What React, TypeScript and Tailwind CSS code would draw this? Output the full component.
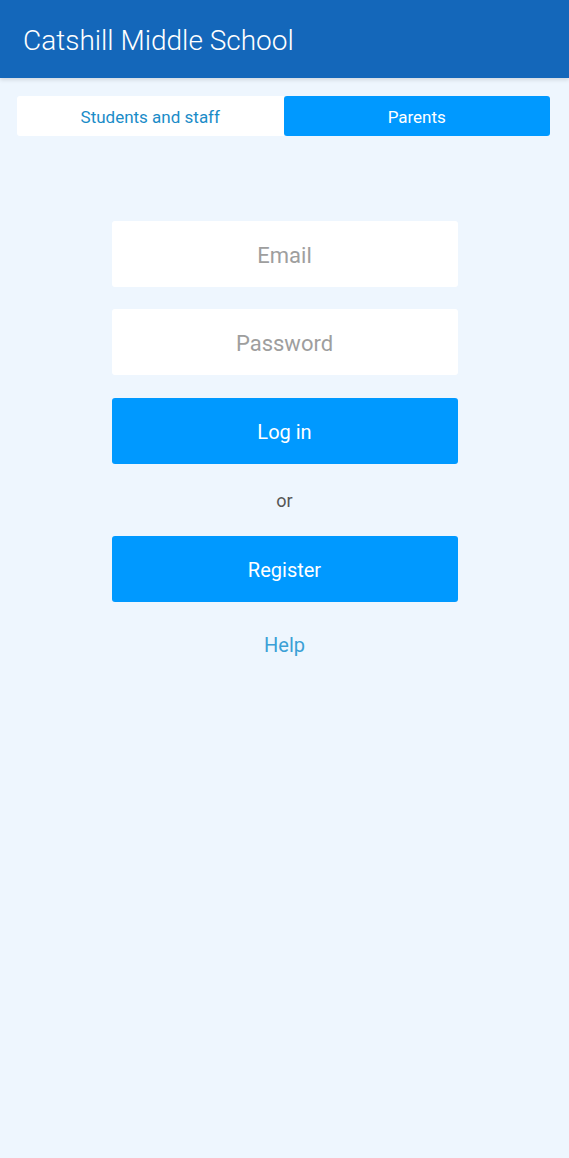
import React from 'react';

const App: React.FC = () => {
  return (
    <div className="min-h-[1158px] w-full bg-[#eef6fe] font-['Roboto',sans-serif]">
      <header className="flex h-[78px] items-center bg-[#1467ba] px-[23px] pt-[3px] shadow-[0_2px_4px_rgba(0,0,0,0.12)]">
        <h1 className="text-[28px] font-light text-white">Catshill Middle School</h1>
      </header>

      <div className="flex pl-[17px] pr-[19px] pt-[18px]">
        <button className="flex h-[40px] flex-1 items-center justify-center rounded-l-[3px] bg-white pt-[3px] text-[17px] text-[#1a8cc8]">
          Students and staff
        </button>
        <button className="flex h-[40px] flex-1 items-center justify-center rounded-[3px] bg-[#0099ff] pt-[3px] text-[17px] text-white">
          Parents
        </button>
      </div>

      <div className="mx-auto flex w-[346px] flex-col pt-[85px]">
        <input
          type="email"
          placeholder="Email"
          className="h-[66px] w-full rounded-[3px] bg-white pt-[2px] text-center text-[22px] text-[#333] outline-none placeholder:text-[#9e9e9e]"
        />
        <input
          type="password"
          placeholder="Password"
          className="mt-[22px] h-[66px] w-full rounded-[3px] bg-white pt-[2px] text-center text-[22px] text-[#333] outline-none placeholder:text-[#9e9e9e]"
        />
        <button className="mt-[23px] h-[66px] w-full rounded-[3px] bg-[#0099ff] pt-[2px] text-[20px] text-white">
          Log in
        </button>
        <p className="mt-[23px] text-center text-[18px] text-[#555]">or</p>
        <button className="mt-[22px] h-[66px] w-full rounded-[3px] bg-[#0099ff] pt-[2px] text-[20px] text-white">
          Register
        </button>
        <a className="mt-[28px] text-center text-[20px] text-[#3ba0d6]">Help</a>
      </div>
    </div>
  );
};

export default App;
